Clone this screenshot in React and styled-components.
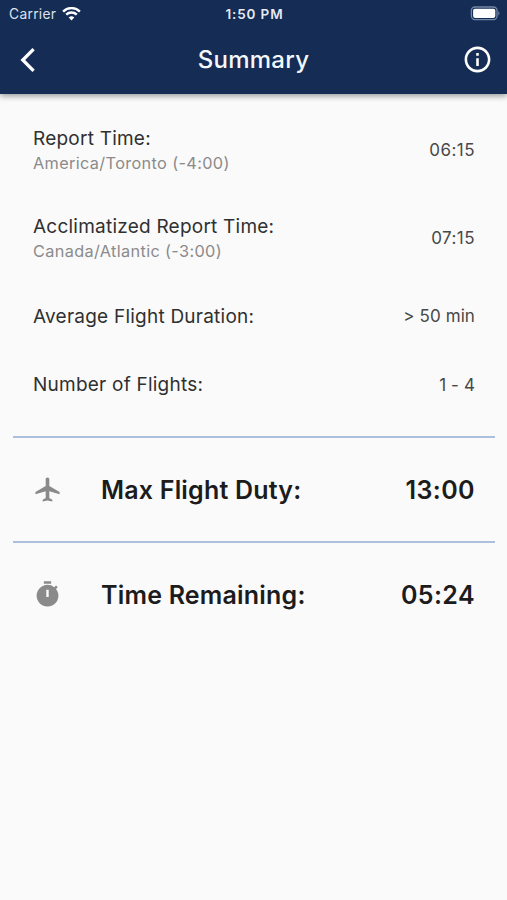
import React from 'react'
import styled, { createGlobalStyle } from 'styled-components'

const GlobalStyle = createGlobalStyle`
  * {
    box-sizing: border-box;
  }
  body {
    margin: 0;
    background: #fafafa;
    font-family: Inter, sans-serif;
  }
`

const Screen = styled.div`
  display: flex;
  flex-direction: column;
  min-height: 900px;
  background: #fafafa;
`

const Header = styled.header`
  height: 94px;
  background: #152c55;
  color: #ffffff;
  box-shadow: 0 2px 6px rgba(0, 0, 0, 0.4);
`

const StatusBar = styled.div`
  display: grid;
  grid-template-columns: 1fr auto 1fr;
  align-items: center;
  height: 27px;
  padding: 0 7px 0 9px;
`

const Carrier = styled.div`
  display: flex;
  align-items: center;
  gap: 6px;
  font-size: 13.8px;
  letter-spacing: 0.3px;
  color: #dce2ee;
`

const Clock = styled.div`
  font-size: 13.5px;
  font-weight: 600;
  letter-spacing: 0.85px;
  color: #e6eaf3;
`

const Battery = styled.svg`
  justify-self: end;
`

const Toolbar = styled.div`
  display: grid;
  grid-template-columns: 1fr auto 1fr;
  align-items: center;
  height: 65px;
  padding: 0 14px 0 16px;
`

const IconButton = styled.button`
  display: flex;
  justify-self: ${({ side }) => side};
  padding: 0;
  border: 0;
  background: transparent;
  color: #ffffff;
  cursor: pointer;
`

const Title = styled.h1`
  margin: 0 2px 0 0;
  font-size: 24px;
  font-weight: 500;
  letter-spacing: 0.25px;
  color: #f4f7fc;
`

const Details = styled.section`
  padding: 12px 32px 17px 33px;
`

const Row = styled.div`
  display: flex;
  align-items: center;
  justify-content: space-between;
  height: ${({ tall }) => (tall ? '88px' : '68.5px')};
`

const Label = styled.div`
  padding-top: 1px;
  font-size: 19px;
  line-height: 26px;
  letter-spacing: 0.23px;
  color: #303030;
`

const Zone = styled.div`
  font-size: 16.3px;
  line-height: 23px;
  letter-spacing: 0.35px;
  color: #8b8b8b;
`

const Value = styled.div`
  font-size: 17px;
  letter-spacing: ${({ wide }) => (wide ? '0.45px' : '0.1px')};
  color: #484848;
`

const Divider = styled.hr`
  width: 482px;
  height: 2px;
  margin: 0 12px 0 13px;
  border: 0;
  background: #acbfde;
`

const TotalRow = styled.section`
  display: flex;
  align-items: center;
  height: 103px;
  padding: 0 32px 0 33px;
`

const TotalIcon = styled.svg`
  width: 29px;
  height: 29px;
  fill: #8a8a8a;
`

const TotalLabel = styled.div`
  flex: 1;
  margin-left: 39px;
  font-size: 25px;
  font-weight: 600;
  letter-spacing: 0.2px;
  color: #1c1c1c;
`

const TotalValue = styled.div`
  font-size: 25px;
  font-weight: 600;
  letter-spacing: 0.4px;
  color: #1c1c1c;
`

const details = [
  { label: 'Report Time:', zone: 'America/Toronto (-4:00)', value: '06:15' },
  { label: 'Acclimatized Report Time:', zone: 'Canada/Atlantic (-3:00)', value: '07:15' },
  { label: 'Average Flight Duration:', value: '> 50 min' },
  { label: 'Number of Flights:', value: '1 - 4' },
]

const totals = [
  {
    label: 'Max Flight Duty:',
    value: '13:00',
    icon: 'M22 16v-2l-8.5-5V3.5c0-.83-.67-1.5-1.5-1.5s-1.5.67-1.5 1.5V9L2 14v2l8.5-2.5V19L8 20.5V22l4-1 4 1v-1.5L13.5 19v-5.5L22 16z',
  },
  {
    label: 'Time Remaining:',
    value: '05:24',
    icon: 'M9 1h6v2H9zM19.03 7.39l1.42-1.42c-.43-.51-.9-.99-1.41-1.41l-1.42 1.42A8.96 8.96 0 0 0 12 4a9 9 0 1 0 7.03 3.39zM13 14h-2V8h2v6z',
  },
]

const App = () => {
  return (
    <Screen>
      <GlobalStyle />
      <Header>
        <StatusBar>
          <Carrier>
            Carrier
            <svg width="19" height="14" viewBox="0 0 19 14" fill="none" stroke="#fff" strokeWidth="2.4">
              <path d="M1.1 4.6a12 12 0 0 1 16.8 0" />
              <path d="M4.2 7.7a7.6 7.6 0 0 1 10.6 0" />
              <path d="M9.5 13.4 6.7 10.5a4 4 0 0 1 5.6 0z" fill="#fff" stroke="none" />
            </svg>
          </Carrier>
          <Clock>1:50 PM</Clock>
          <Battery width="30" height="15" viewBox="0 0 30 15">
            <rect x="1.4" y="1" width="25.6" height="12.6" rx="3.5" fill="none" stroke="#7587a7" strokeWidth="1.3" />
            <rect x="3.1" y="2.7" width="22.2" height="9.2" rx="1.8" fill="#fff" />
            <path d="M28.3 5.2c1.6.6 1.6 3.6 0 4.2z" fill="#7587a7" />
          </Battery>
        </StatusBar>
        <Toolbar>
          <IconButton side="start" aria-label="Back">
            <svg width="20" height="28" viewBox="0 0 20 28" fill="none" stroke="currentColor" strokeWidth="3.3">
              <path d="M17.6 3.2 6.8 14l10.8 10.8" />
            </svg>
          </IconButton>
          <Title>Summary</Title>
          <IconButton side="end" aria-label="Info">
            <svg width="31" height="31" viewBox="0 0 24 24" fill="currentColor">
              <path d="M11 7h2v2h-2zm0 4h2v6h-2zm1-9C6.48 2 2 6.48 2 12s4.48 10 10 10 10-4.48 10-10S17.52 2 12 2zm0 18c-4.41 0-8-3.59-8-8s3.59-8 8-8 8 3.59 8 8-3.59 8-8 8z" />
            </svg>
          </IconButton>
        </Toolbar>
      </Header>
      <Details>
        {details.map((item) => (
          <Row key={item.label} tall={item.zone ? 1 : 0}>
            <div>
              <Label>{item.label}</Label>
              {item.zone && <Zone>{item.zone}</Zone>}
            </div>
            <Value wide={item.zone ? 1 : 0}>{item.value}</Value>
          </Row>
        ))}
      </Details>
      {totals.map((item) => (
        <React.Fragment key={item.label}>
          <Divider />
          <TotalRow>
            <TotalIcon viewBox="0 0 24 24">
              <path d={item.icon} fillRule="evenodd" />
            </TotalIcon>
            <TotalLabel>{item.label}</TotalLabel>
            <TotalValue>{item.value}</TotalValue>
          </TotalRow>
        </React.Fragment>
      ))}
    </Screen>
  )
}

export default App
